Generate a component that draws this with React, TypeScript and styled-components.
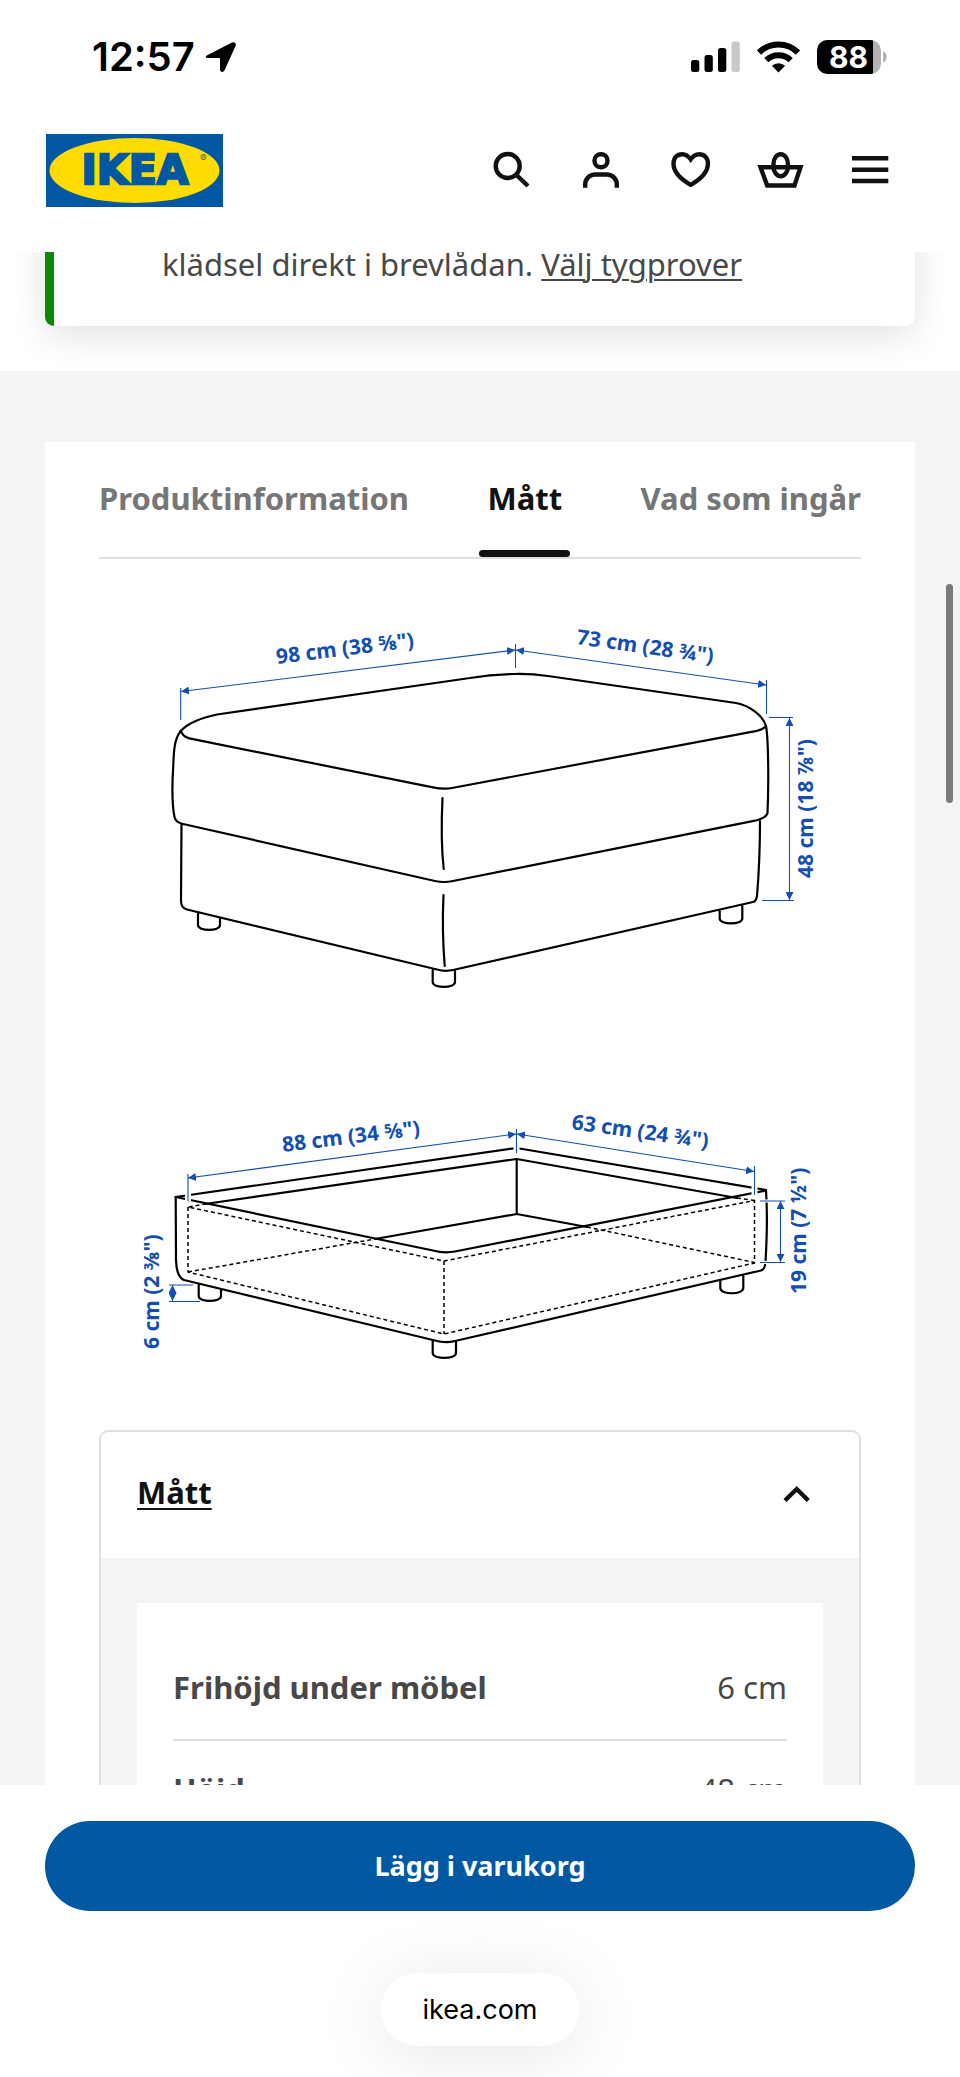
import React, { useState } from 'react';
import styled, { createGlobalStyle } from 'styled-components';

const GlobalStyle = createGlobalStyle`
  *, *::before, *::after { box-sizing: border-box; }
  body { margin: 0; background: #fff; }
  button { font: inherit; color: inherit; background: none; border: 0; padding: 0; cursor: pointer; }
`;

const textFont = `"Noto Sans", "Open Sans", sans-serif`;
const systemFont = `Inter, "Liberation Sans", sans-serif`;
const dimBlue = '#134fb0';

const Screen = styled.div`
  position: relative;
  display: flex;
  flex-direction: column;
  height: 100vh;
  overflow: hidden;
  background: #fff;
  color: #484848;
  font-family: ${textFont};
  font-size: 31px;
  line-height: 48px;
`;

const StatusBar = styled.div`
  flex: none;
  display: flex;
  justify-content: space-between;
  align-items: center;
  height: 90px;
  padding: 24px 73px 0 92px;
  color: #000;
  font-family: ${systemFont};
`;

const StatusGroup = styled.div<{ $gap: number }>`
  display: flex;
  align-items: center;
  gap: ${({ $gap }) => $gap}px;
`;

const Clock = styled.span`
  font-size: 40px;
  font-weight: 600;
`;

const Header = styled.header`
  flex: none;
  display: flex;
  justify-content: space-between;
  align-items: center;
  height: 162px;
  padding: 0 44px 2px 46px;
`;

const LogoLink = styled.a`
  display: block;
  line-height: 0;
`;

const HeaderActions = styled.nav`
  display: flex;
`;

const IconButton = styled.button`
  display: flex;
  justify-content: center;
  align-items: center;
  width: 90px;
  height: 90px;
  color: #111;
`;

const Icon = styled.svg`
  width: 54px;
  height: 54px;
  fill: none;
  stroke: currentColor;
  stroke-width: 4.4;
`;

const Main = styled.main`
  flex: 1;
  min-height: 0;
  overflow: hidden;
`;

const Notice = styled.section`
  margin: -44px 45px 45px;
  padding: 32px 45px 38px 108px;
  border-left: 9px solid #0a8a00;
  border-radius: 9px;
  background: #fff;
  box-shadow: 0 9px 36px rgba(0, 0, 0, 0.12);
`;

const NoticeText = styled.p`
  margin: 0;

  a {
    color: inherit;
    text-decoration-thickness: 2px;
    text-underline-offset: 3px;
  }
`;

const Details = styled.section`
  padding: 71px 45px 0;
  background: #f4f4f4;
`;

const Card = styled.div`
  padding: 0 54px 54px;
  background: #fff;
`;

const TabList = styled.div`
  display: flex;
  justify-content: space-between;
  border-bottom: 2px solid #dfdfdf;
`;

const Tab = styled.button<{ $active: boolean }>`
  position: relative;
  height: 115px;
  padding-bottom: 4px;
  font-weight: 700;
  white-space: nowrap;
  color: ${({ $active }) => ($active ? '#111' : '#767676')};

  &::after {
    content: '';
    display: ${({ $active }) => ($active ? 'block' : 'none')};
    position: absolute;
    right: -8px;
    bottom: 0;
    left: -8px;
    height: 7px;
    border-radius: 4px;
    background: #111;
  }
`;

const Drawing = styled.svg`
  display: block;
  width: 100%;
  height: auto;
  fill: none;
  stroke: #000;
  stroke-width: 2.2;
  stroke-linecap: round;
  stroke-linejoin: round;
`;

const DimLines = styled.g`
  stroke: ${dimBlue};
  stroke-width: 1.1;
  stroke-linecap: butt;
`;

const DimText = styled.text`
  fill: ${dimBlue};
  stroke: none;
  font-size: 21px;
  font-weight: 700;
`;

const Accordion = styled.section`
  border: 2px solid #dfdfdf;
  border-radius: 9px;
  overflow: hidden;
`;

const AccordionHeading = styled.h2`
  margin: 0;
  font-size: inherit;
`;

const AccordionToggle = styled.button`
  display: flex;
  justify-content: space-between;
  align-items: center;
  width: 100%;
  height: 126px;
  padding: 0 36px 6px;
  color: #111;
  font-weight: 700;
  text-decoration: underline;
  text-decoration-thickness: 2px;
  text-underline-offset: 4px;
`;

const AccordionBody = styled.div`
  padding: 45px 36px;
  background: #f4f4f4;
`;

const MeasureSheet = styled.div`
  padding: 36px;
  background: #fff;
`;

const MeasureTable = styled.table`
  width: 100%;
  border-collapse: collapse;

  th, td {
    padding: 24px 0 28px;
    border-bottom: 2px solid #dfdfdf;
  }
  th { text-align: left; font-weight: 700; }
  td { text-align: right; }
`;

const BottomBar = styled.footer`
  flex: none;
  display: flex;
  flex-direction: column;
  align-items: center;
  gap: 62px;
  padding: 36px 45px 31px;
  background: #fff;
`;

const BuyButton = styled.button`
  width: 100%;
  height: 90px;
  border-radius: 45px;
  background: #0058a3;
  color: #fff;
  font-size: 27px;
  font-weight: 700;
`;

const AddressPill = styled.button`
  height: 73px;
  padding: 0 42px;
  border-radius: 37px;
  background: #fff;
  box-shadow: 0 8px 72px rgba(0, 0, 0, 0.1);
  color: #000;
  font-family: ${systemFont};
  font-size: 27px;
`;

const ScrollThumb = styled.div`
  position: absolute;
  top: 584px;
  right: 7px;
  width: 7px;
  height: 219px;
  border-radius: 4px;
  background: #7a7a7a;
`;

function LocationArrow() {
  return (
    <svg width="32" height="32" viewBox="0 0 32 32" aria-hidden="true">
      <path d="M2.2 14.2 27 1.600c2.600-1.300 4.700.9 3.500 3.300L19.600 29.300c-1.200 2.600-4.600 2.100-4.600-.8V18.200c0-.8-.4-1.200-1.200-1.200H3.400c-2.900 0-3.600-1.700-1.200-2.800z" fill="#000" />
    </svg>
  );
}

function Signal() {
  return (
    <svg width="49" height="32" viewBox="0 0 49 32" role="img" aria-label="Signal">
      <rect x="0" y="19" width="8.300" height="12" rx="2.500" />
      <rect x="13.500" y="14" width="8.300" height="17" rx="2.500" />
      <rect x="27" y="7" width="8.300" height="24" rx="2.500" />
      <rect x="40.500" y="0.500" width="8.300" height="30.500" rx="2.500" fill="#c8c8c8" />
    </svg>
  );
}

function Wifi() {
  return (
    <svg width="43" height="32" viewBox="0 0 43 32" role="img" aria-label="Wifi">
      <g fill="none" stroke="#000" strokeWidth="6">
        <path d="M2 11.500a28 28 0 0 1 39 0" />
        <path d="M9.300 19.200a17.500 17.500 0 0 1 24.400 0" />
      </g>
      <path d="M14.900 24.800a9.500 9.500 0 0 1 13.200 0L21.500 31.500z" />
    </svg>
  );
}

function Battery() {
  return (
    <svg width="70" height="34" viewBox="0 0 70 34">
      <clipPath id="battery-body"><rect width="64" height="34" rx="10.500" /></clipPath>
      <g clipPath="url(#battery-body)">
        <rect width="64" height="34" fill="#b3b3b3" />
        <rect width="56" height="34" />
      </g>
      <path d="M66 11.500c5 1.500 5 9.500 0 11z" fill="#b3b3b3" />
      <text x="31.500" y="28" textAnchor="middle" fill="#fff" fontSize="30" fontWeight="700">88</text>
    </svg>
  );
}

function Logo() {
  return (
    <svg width="177" height="73" viewBox="0 0 177 73">
      <rect width="177" height="73" fill="#0058a3" />
      <ellipse cx="88.500" cy="36.500" rx="85" ry="32.500" fill="#ffdb00" />
      <text x="89" y="50" textAnchor="middle" fontFamily="'DejaVu Sans', sans-serif" fontSize="41" fontWeight="700" fill="#0058a3" stroke="#0058a3" strokeWidth="2.400">IKEA</text>
      <text x="154" y="28" fontFamily="Inter, sans-serif" fontSize="10" fill="#3f6a50">®</text>
    </svg>
  );
}

function Ottoman() {
  return (
    <Drawing viewBox="99 559 762 500">
      <defs>
        <marker id="arrow" viewBox="0 0 8 8" refX="8" refY="4" markerWidth="8" markerHeight="8" markerUnits="userSpaceOnUse" orient="auto-start-reverse">
          <path d="M0 0 8 4 0 8z" fill={dimBlue} stroke="none" />
        </marker>
      </defs>
      <path d="M180.700 731C189 722 202 718 217 714.500L470 678Q492 674.200 515 674Q532 673.700 548 676L736 703C750 705.500 763 716 766 726" />
      <path d="M180.700 731C183 736 186 738 193 739.200L433 787.300Q443 789.500 452 788L757 730.800Q764 729 766 726" />
      <path d="M180.700 731C174.500 739 173.800 750 173.300 765C172 785 172 805 174.500 817Q175.500 822 182 823.700L435 881Q444 883 453 881L755 820.700Q766.500 818 767.500 813C768.800 785 768.500 740 766 726" />
      <path d="M442.500 798Q440.500 840 443.700 869M443.500 895Q441.800 930 444.700 966" />
      <path d="M181.500 824 181 900Q180.800 908 187 909.500L437 969.500Q445 971.800 453 970L753 902Q756 901.500 757 896Q760 860 760 821" />
      <path d="M198 913V925C198 931.500 220 931.500 220 925V918M432.700 970V982C432.700 988.500 455 988.500 455 982V971M719.700 911V918.500C719.700 925 742.300 925 742.300 918.500V906" />
      <DimLines>
        <path d="M180.700 688V720M515.500 644V668M766.500 680V714M769 717.500H793M762 900.500H794" />
        <path d="M181 691.500 515 650" markerStart="url(#arrow)" markerEnd="url(#arrow)" />
        <path d="M516 650 766 685" markerStart="url(#arrow)" markerEnd="url(#arrow)" />
        <path d="M789.500 718V900" markerStart="url(#arrow)" markerEnd="url(#arrow)" />
      </DimLines>
      <DimText transform="translate(277 664) rotate(-7)">98 cm (38 ⅝")</DimText>
      <DimText transform="translate(576 644) rotate(8)">73 cm (28 ¾")</DimText>
      <DimText transform="translate(813 878) rotate(-90)">48 cm (18 ⅞")</DimText>
    </Drawing>
  );
}

function StorageBase() {
  return (
    <Drawing viewBox="99 1059 762 371">
      <path d="M175.700 1197 516.500 1148 766 1190" />
      <path d="M175.700 1197 433 1250.500Q444 1253.500 455 1251.500L766 1190.500" />
      <path d="M205 1204 516.700 1159 737 1198M516.700 1159V1214M375 1239 516.700 1214 587 1227" />
      <path d="M175.700 1197 176 1260Q176.500 1277 184 1280L435 1340.500Q445 1343.500 455 1341L761 1270.500Q765 1269.500 765.500 1262Q768 1220 766 1190" />
      <path d="M198.700 1285V1296C198.700 1302.500 221 1302.500 221 1296V1290M432.700 1341V1353C432.700 1359.500 456 1359.500 456 1353V1341M720.300 1281V1288C720.300 1295 743.300 1295 743.300 1288V1276" />
      <g strokeWidth="1.500" strokeDasharray="4 3" strokeLinecap="butt">
        <path d="M188 1207V1272L444 1334 754.500 1263V1200.500L444 1261 188 1207 205 1204M444 1261V1334" />
        <path d="M188 1272 375 1239M587 1227 754.500 1262.500M737 1198 754.500 1200.500" />
      </g>
      <g stroke="#fff" strokeLinecap="butt">
        <path d="M188 1190V1201M516.500 1144V1153M754.500 1184V1195" strokeWidth="6" />
        <path d="M760 1201H772M760 1262.500H772" strokeWidth="3" />
      </g>
      <DimLines>
        <path d="M188 1174V1201M516.500 1129V1153M754.500 1166V1195M760 1201H785M760 1262.500H785M169 1285H193M169 1301.500H200" />
        <path d="M188 1178 516 1134" markerStart="url(#arrow)" markerEnd="url(#arrow)" />
        <path d="M517 1134 754 1171.500" markerStart="url(#arrow)" markerEnd="url(#arrow)" />
        <path d="M780.500 1201V1262" markerStart="url(#arrow)" markerEnd="url(#arrow)" />
        <path d="M172.500 1285V1301" markerStart="url(#arrow)" markerEnd="url(#arrow)" />
      </DimLines>
      <DimText transform="translate(283 1152) rotate(-7)">88 cm (34 ⅝")</DimText>
      <DimText transform="translate(571 1129) rotate(8)">63 cm (24 ¾")</DimText>
      <DimText transform="translate(159 1349) rotate(-90)">6 cm (2 ⅜")</DimText>
      <DimText transform="translate(806 1294) rotate(-90)">19 cm (7 ½")</DimText>
    </Drawing>
  );
}

const tabs = ['Produktinformation', 'Mått', 'Vad som ingår'];

const measures = [
  { name: 'Frihöjd under möbel', value: '6 cm' },
  { name: 'Höjd', value: '48 cm' },
];

export default function App() {
  const [activeTab, setActiveTab] = useState('Mått');
  const [open, setOpen] = useState(true);

  return (
    <Screen>
      <GlobalStyle />
      <StatusBar>
        <StatusGroup $gap={10}>
          <Clock>12:57</Clock>
          <LocationArrow />
        </StatusGroup>
        <StatusGroup $gap={17}>
          <Signal />
          <Wifi />
          <Battery />
        </StatusGroup>
      </StatusBar>

      <Header>
        <LogoLink href="#" aria-label="IKEA">
          <Logo />
        </LogoLink>
        <HeaderActions>
          <IconButton aria-label="Sök">
            <Icon viewBox="0 0 54 54">
              <circle cx="23.700" cy="23" r="12" />
              <path d="M32 31.500 44 43" />
            </Icon>
          </IconButton>
          <IconButton aria-label="Logga in">
            <Icon viewBox="0 0 54 54">
              <rect x="20.500" y="11.200" width="13" height="13" rx="6.300" />
              <path d="M11.200 44.700V41.500A10 10 0 0 1 21.200 31.500H32.800A10 10 0 0 1 42.800 41.500V44.700" />
            </Icon>
          </IconButton>
          <IconButton aria-label="Favoriter">
            <Icon viewBox="0 0 54 54">
              <path d="M26.700 16.300C24.300 13 21.500 11.200 18.300 11.200C13 11.200 9.500 15 9.500 20.500C9.500 29 15.500 35.500 26.700 41.800C37.900 35.500 43.900 29 43.900 20.500C43.900 15 40.400 11.200 35.100 11.200C31.900 11.200 29.100 13 26.700 16.300Z" />
            </Icon>
          </IconButton>
          <IconButton aria-label="Varukorg">
            <Icon viewBox="0 0 54 54">
              <path d="M6.500 24.200H46.500L40.500 42.500H13.200Z" />
              <rect x="19.500" y="11.200" width="14.400" height="22" rx="7.200" ry="9.500" />
            </Icon>
          </IconButton>
          <IconButton aria-label="Meny">
            <Icon viewBox="0 0 54 54">
              <path d="M8 15.300H44.300M8 26.700H44.300M8 38H44.300" />
            </Icon>
          </IconButton>
        </HeaderActions>
      </Header>

      <Main>
        <Notice>
          <NoticeText>
            klädsel direkt i brevlådan. <a href="#">Välj tygprover</a>
          </NoticeText>
        </Notice>

        <Details>
          <Card>
            <TabList role="tablist">
              {tabs.map((tab) => (
                <Tab
                  key={tab}
                  role="tab"
                  aria-selected={tab === activeTab}
                  $active={tab === activeTab}
                  onClick={() => setActiveTab(tab)}
                >
                  {tab}
                </Tab>
              ))}
            </TabList>
            <Ottoman />
            <StorageBase />
            <Accordion>
              <AccordionHeading>
                <AccordionToggle aria-expanded={open} onClick={() => setOpen(!open)}>
                  Mått
                  <Icon viewBox="0 0 54 54">
                    <path d="M16 35.500 27.700 24 39.300 35.500" />
                  </Icon>
                </AccordionToggle>
              </AccordionHeading>
              {open && (
                <AccordionBody>
                  <MeasureSheet>
                    <MeasureTable>
                      <tbody>
                        {measures.map(({ name, value }) => (
                          <tr key={name}>
                            <th scope="row">{name}</th>
                            <td>{value}</td>
                          </tr>
                        ))}
                      </tbody>
                    </MeasureTable>
                  </MeasureSheet>
                </AccordionBody>
              )}
            </Accordion>
          </Card>
        </Details>
      </Main>

      <BottomBar>
        <BuyButton>Lägg i varukorg</BuyButton>
        <AddressPill>ikea.com</AddressPill>
      </BottomBar>
      <ScrollThumb />
    </Screen>
  );
}
